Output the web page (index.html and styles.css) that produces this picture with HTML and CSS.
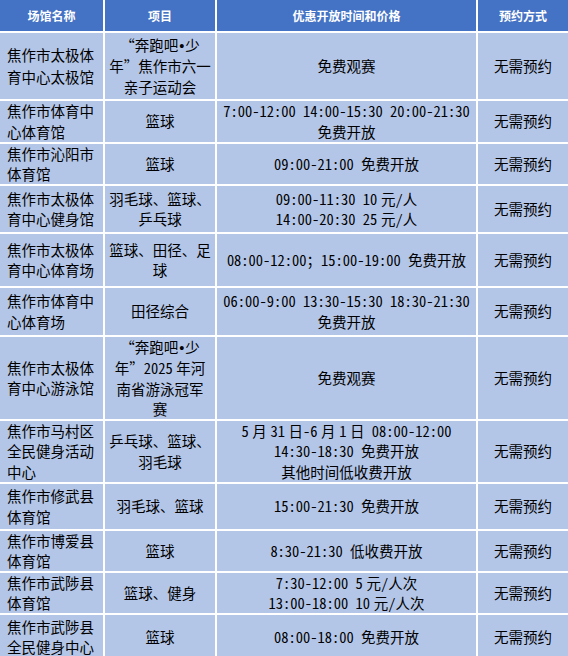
FILE: index.html
```html
<!DOCTYPE html>
<html lang="zh-CN">
<head>
<meta charset="utf-8">
<title>场馆优惠开放</title>
<link rel="stylesheet" href="styles.css">
</head>
<body>
<div class="sheet">
  <div class="cell head"><p>场馆名称</p></div>
  <div class="cell head"><p>项目</p></div>
  <div class="cell head"><p>优惠开放时间和价格</p></div>
  <div class="cell head"><p>预约方式</p></div>

  <div class="cell name loose"><p>焦作市太极体<br>育中心太极馆</p></div>
  <div class="cell"><p>“奔跑吧<span class="dot">•</span>少<br>年”焦作市六一<br>亲子运动会</p></div>
  <div class="cell"><p>免费观赛</p></div>
  <div class="cell"><p>无需预约</p></div>

  <div class="cell name"><p>焦作市体育中<br>心体育馆</p></div>
  <div class="cell"><p>篮球</p></div>
  <div class="cell"><p>7:00-12:00 14:00-15:30 20:00-21:30<br>免费开放</p></div>
  <div class="cell"><p>无需预约</p></div>

  <div class="cell name"><p>焦作市沁阳市<br>体育馆</p></div>
  <div class="cell"><p>篮球</p></div>
  <div class="cell"><p>09:00-21:00 免费开放</p></div>
  <div class="cell"><p>无需预约</p></div>

  <div class="cell name"><p>焦作市太极体<br>育中心健身馆</p></div>
  <div class="cell"><p>羽毛球、篮球、<br>乒乓球</p></div>
  <div class="cell"><p>09:00-11:30 10<span class="as"></span>元/人<br>14:00-20:30 25<span class="as"></span>元/人</p></div>
  <div class="cell"><p>无需预约</p></div>

  <div class="cell name"><p>焦作市太极体<br>育中心体育场</p></div>
  <div class="cell"><p>篮球、田径、足<br>球</p></div>
  <div class="cell"><p>08:00-12:00；15:00-19:00 免费开放</p></div>
  <div class="cell"><p>无需预约</p></div>

  <div class="cell name"><p>焦作市体育中<br>心体育场</p></div>
  <div class="cell"><p>田径综合</p></div>
  <div class="cell"><p>06:00-9:00 13:30-15:30 18:30-21:30<br>免费开放</p></div>
  <div class="cell"><p>无需预约</p></div>

  <div class="cell name"><p>焦作市太极体<br>育中心游泳馆</p></div>
  <div class="cell"><p>“奔跑吧<span class="dot">•</span>少<br>年”2025<span class="as"></span>年河<br>南省游泳冠军<br>赛</p></div>
  <div class="cell"><p>免费观赛</p></div>
  <div class="cell"><p>无需预约</p></div>

  <div class="cell name"><p>焦作市马村区<br>全民健身活动<br>中心</p></div>
  <div class="cell"><p>乒乓球、篮球、<br>羽毛球</p></div>
  <div class="cell"><p>5<span class="as"></span>月<span class="as"></span>31<span class="as"></span>日-6<span class="as"></span>月<span class="as"></span>1<span class="as"></span>日 08:00-12:00<br>14:30-18:30 免费开放<br>其他时间低收费开放</p></div>
  <div class="cell"><p>无需预约</p></div>

  <div class="cell name"><p>焦作市修武县<br>体育馆</p></div>
  <div class="cell"><p>羽毛球、篮球</p></div>
  <div class="cell"><p>15:00-21:30 免费开放</p></div>
  <div class="cell"><p>无需预约</p></div>

  <div class="cell name"><p>焦作市博爱县<br>体育馆</p></div>
  <div class="cell"><p>篮球</p></div>
  <div class="cell"><p>8:30-21:30 低收费开放</p></div>
  <div class="cell"><p>无需预约</p></div>

  <div class="cell name"><p>焦作市武陟县<br>体育馆</p></div>
  <div class="cell"><p>篮球、健身</p></div>
  <div class="cell"><p>7:30-12:00 5<span class="as"></span>元/人次<br>13:00-18:00 10<span class="as"></span>元/人次</p></div>
  <div class="cell"><p>无需预约</p></div>

  <div class="cell name"><p>焦作市武陟县<br>全民健身中心</p></div>
  <div class="cell"><p>篮球</p></div>
  <div class="cell"><p>08:00-18:00 免费开放</p></div>
  <div class="cell"><p>无需预约</p></div>
</div>
</body>
</html>
```
FILE: styles.css
```css
html, body {
  margin: 0;
  padding: 0;
  background: #ffffff;
}

body {
  font-family: "Noto Sans CJK SC", "Noto Sans", sans-serif;
  color: #000000;
}

.sheet {
  display: grid;
  width: 568px;
  grid-template-columns: 103px 110px 259px 90px;
  grid-template-rows: 31px 66px 41px 40px 46px 52px 47px 82px 61px 45px 40px 40px 44px;
  gap: 2px;
  background: #ffffff;
}

.cell {
  background: #b4c6e7;
  display: flex;
  align-items: center;
  justify-content: center;
  text-align: center;
  font-size: 14.5px;
  line-height: 20.5px;
  white-space: nowrap;
  overflow: hidden;
  font-feature-settings: "hwid" 1;
}

.cell p {
  margin: 0;
}

.head {
  background: #4472c4;
  color: #ffffff;
  font-weight: bold;
  font-size: 12px;
  line-height: 16px;
}

.name {
  justify-content: flex-start;
  text-align: left;
  padding-left: 7px;
}

.loose {
  line-height: 22.5px;
}

.as {
  display: inline-block;
  width: 3.6px;
}

.dot {
  font-family: "Liberation Sans", sans-serif;
  font-feature-settings: normal;
  padding: 0 1px;
}
```
